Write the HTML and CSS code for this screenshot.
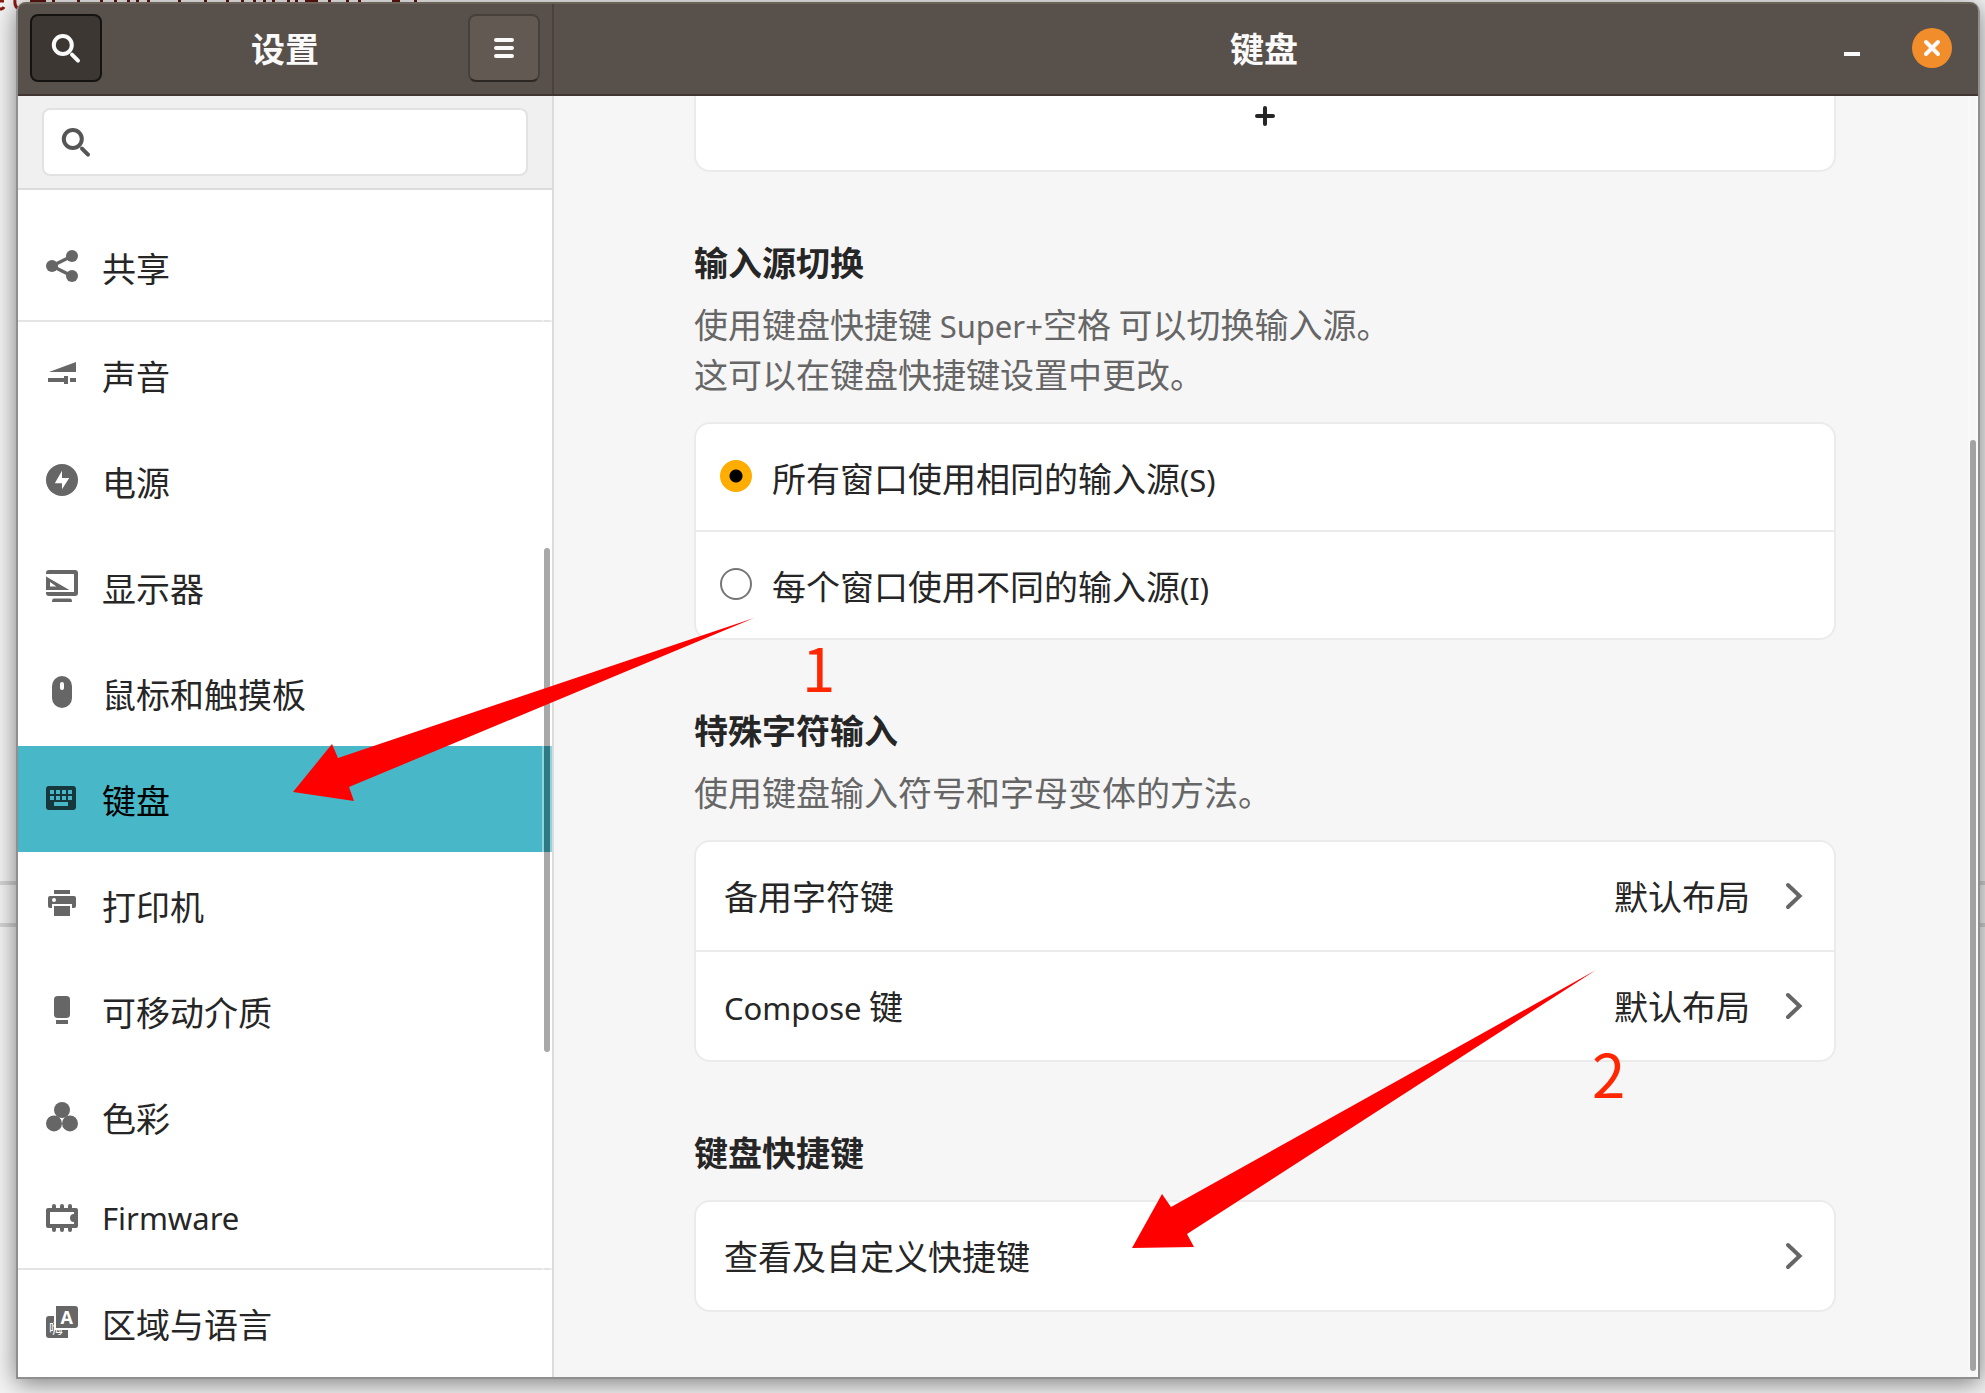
FILE: index.html
```html
<!DOCTYPE html>
<html lang="zh-CN">
<head>
<meta charset="utf-8">
<meta name="viewport" content="width=device-width, initial-scale=1">
<title>键盘 - 设置</title>
<link rel="stylesheet" href="styles.css">
</head>
<body>
<svg class="backdrop-marks" aria-hidden="true">
  <g fill="none" stroke="#8b1a10" stroke-width="3"><path d="M0 1h4M0 9q3 0 4-2M15 0q-1 8 5 9"/></g>
  <path fill="#5e1510" d="M30 0h16v2h-16zM52 0h3v2h-3zM77 0h3v2h-3zM100 0h3v2h-3zM114 0h3v2h-3zM127 0h3v2h-3zM136 0h3v2h-3zM147 0h3v2h-3zM178 0h3v2h-3zM204 0h3v2h-3zM226 0h3v2h-3zM241 0h3v2h-3zM253 0h3v2h-3zM263 0h3v2h-3zM272 0h3v2h-3zM287 0h3v2h-3zM295 0h3v2h-3zM305 0h13v2h-13zM328 0h3v2h-3zM346 0h3v2h-3zM358 0h3v2h-3zM392 0h8v2h-8zM414 0h3v2h-3z"/>
</svg>
<div class="window">
  <header class="titlebar">
    <div class="titlebar-side">
      <button class="tool-button is-active" type="button" aria-label="搜索">
        <svg class="icon" viewBox="0 0 16 16"><g fill="none" stroke="currentColor" stroke-width="2"><circle cx="6.4" cy="6.5" r="4.5"/><path stroke-linecap="round" d="M11 11.3l3 3"/></g></svg>
      </button>
      <h1 class="title">设置</h1>
      <button class="tool-button" type="button" aria-label="菜单">
        <svg class="icon" viewBox="0 0 16 16"><path stroke="currentColor" stroke-width="2" stroke-linecap="round" d="M4 4h8M4 8h8M4 12h8"/></svg>
      </button>
    </div>
    <div class="titlebar-main">
      <h2 class="title">键盘</h2>
      <div class="window-controls">
        <button class="minimize-button" type="button" aria-label="最小化"><svg class="icon" viewBox="0 0 16 16"><path fill="currentColor" d="M4 10h8v2H4z"/></svg></button>
        <button class="close-button" type="button" aria-label="关闭"><svg class="icon" viewBox="0 0 16 16"><path fill="none" stroke="currentColor" stroke-width="2" stroke-linecap="round" d="M5 5l6 6M11 5l-6 6"/></svg></button>
      </div>
    </div>
  </header>
  <div class="panes">
    <aside class="sidebar">
      <div class="search-bar">
        <label class="search-field">
          <svg class="icon" viewBox="0 0 16 16"><g fill="none" stroke="currentColor" stroke-width="2"><circle cx="6.4" cy="6.5" r="4.5"/><path stroke-linecap="round" d="M11 11.3l3 3"/></g></svg>
          <input class="search-input" type="text" aria-label="搜索设置">
        </label>
      </div>
      <nav class="nav">
        <a class="nav-row" href="#sharing">
          <svg class="icon" viewBox="0 0 16 16"><g fill="currentColor"><circle cx="3" cy="8" r="3"/><circle cx="13" cy="3" r="3"/><circle cx="13" cy="13" r="3"/></g><path fill="none" stroke="currentColor" stroke-width="1.7" d="M13 3L3 8l10 5"/></svg>
          <span class="nav-label">共享</span>
        </a>
        <a class="nav-row group-start" href="#sound">
          <svg class="icon" viewBox="0 0 16 16"><path fill="currentColor" d="M1.500 7L15 2v5zM1 10h8V9h2v4H9v-1H1zM12 10h3v2h-3z"/></svg>
          <span class="nav-label">声音</span>
        </a>
        <a class="nav-row" href="#power">
          <svg class="icon" viewBox="0 0 16 16"><circle cx="8" cy="8" r="8" fill="currentColor"/><path fill="#fff" d="M8 3.4L4.4 9.6H8v3L11.6 7H8z"/></svg>
          <span class="nav-label">电源</span>
        </a>
        <a class="nav-row" href="#displays">
          <svg class="icon" viewBox="0 0 16 16"><path fill="currentColor" fill-rule="evenodd" d="M0 2V1.500Q0 0 1.500 0h13Q16 0 16 1.500v10Q16 13 14.500 13h-13Q0 13 0 11.500V11h14V2zM0 3.300L11.700 10H0zM2 6v2.200h3.200zM3 16q0-1.700 1-1.700h8q1 0 1 1.700z"/></svg>
          <span class="nav-label">显示器</span>
        </a>
        <a class="nav-row" href="#mouse">
          <svg class="icon" viewBox="0 0 16 16"><rect x="3" width="10" height="16" rx="5" fill="currentColor"/><rect x="7" y="3" width="2" height="4" rx="1" fill="#fff"/></svg>
          <span class="nav-label">鼠标和触摸板</span>
        </a>
        <a class="nav-row is-selected" href="#keyboard" aria-current="page">
          <svg class="icon" viewBox="0 0 16 16"><path fill="currentColor" fill-rule="evenodd" d="M1.500 2h12Q15 2 15 3.500v9q0 1.500-1.500 1.500h-12Q0 14 0 12.500v-9Q0 2 1.500 2zM2 4v2h2V4zM5 4v2h2V4zM8 4v2h2V4zM11 4v2h2V4zM2 7v2h2V7zM5 7v2h2V7zM8 7v2h2V7zM11 7v2h2V7zM4 10v2h7v-2z"/></svg>
          <span class="nav-label">键盘</span>
        </a>
        <a class="nav-row" href="#printers">
          <svg class="icon" viewBox="0 0 16 16"><path fill="currentColor" fill-rule="evenodd" d="M4 1h8v2H4zM2 4h12q1 0 1 1v4q0 1-1 1h-1V8H3v2H2q-1 0-1-1V5q0-1 1-1zM4 5a1 1 0 100 2 1 1 0 000-2zM4 9h8v5H4z"/></svg>
          <span class="nav-label">打印机</span>
        </a>
        <a class="nav-row" href="#media">
          <svg class="icon" viewBox="0 0 16 16"><g fill="currentColor"><rect x="4" y="1" width="8" height="11" rx="1.800"/><path d="M5 13h6v2H5z"/></g></svg>
          <span class="nav-label">可移动介质</span>
        </a>
        <a class="nav-row" href="#color">
          <svg class="icon" viewBox="0 0 16 16"><g fill="currentColor"><circle cx="8" cy="5" r="4"/><circle cx="4" cy="11.700" r="4"/><circle cx="12" cy="11.700" r="4"/></g></svg>
          <span class="nav-label">色彩</span>
        </a>
        <a class="nav-row is-short" href="#firmware">
          <svg class="icon" viewBox="0 0 16 16"><path fill="currentColor" fill-rule="evenodd" d="M1 3h14q1 0 1 1v8q0 1-1 1H1q-1 0-1-1V4q0-1 1-1zM2 5v6h12v-1a2 2 0 010-4V5z"/><path stroke="currentColor" stroke-width="2" stroke-linecap="round" d="M4 2v2M8 2v2M12 2v2M4 12v2M8 12v2M12 12v2"/></svg>
          <span class="latin">Firmware</span>
        </a>
        <a class="nav-row group-start" href="#region">
          <svg class="icon" viewBox="0 0 16 16"><path fill="currentColor" d="M1.500 5H4v7h7v4H1.500Q0 16 0 14.500v-8Q0 5 1.500 5zM5 0h9.500Q16 0 16 1.500v8q0 1.500-1.500 1.500H5z"/><text class="glyph-han" x="1.500" y="13.500">嗨</text><path fill="currentColor" d="M5 0h9v11H5z"/><text class="glyph-latin" x="7.200" y="9">A</text></svg>
          <span class="nav-label">区域与语言</span>
        </a>
      </nav>
      <div class="scrollbar sidebar-scrollbar"><div class="scroll-thumb"></div></div>
    </aside>
    <main class="content">
      <button class="card add-button" type="button" aria-label="添加输入源">
        <svg class="icon" viewBox="0 0 16 16"><path stroke="currentColor" stroke-width="2" stroke-linecap="round" d="M8 4v8M4 8h8"/></svg>
      </button>
      <section class="section">
        <h3 class="section-title">输入源切换</h3>
        <p class="section-note">使用键盘快捷键 <span class="latin">Super+</span>空格 可以切换输入源。<br>这可以在键盘快捷键设置中更改。</p>
        <div class="card">
          <label class="card-row radio-row"><input class="radio" type="radio" name="source" checked><span class="nav-label">所有窗口使用相同的输入源<span class="latin">(S)</span></span></label>
          <label class="card-row radio-row"><input class="radio" type="radio" name="source"><span class="nav-label">每个窗口使用不同的输入源<span class="latin">(I)</span></span></label>
        </div>
      </section>
      <section class="section">
        <h3 class="section-title">特殊字符输入</h3>
        <p class="section-note">使用键盘输入符号和字母变体的方法。</p>
        <div class="card">
          <button class="card-row link-row" type="button"><span class="row-label">备用字符键</span><span>默认布局</span><svg class="icon chevron" viewBox="0 0 16 16"><path fill="none" stroke="currentColor" stroke-width="2" stroke-linecap="round" d="M7 2.500L12.800 8 7 13.500"/></svg></button>
          <button class="card-row link-row" type="button"><span class="row-label"><span class="latin">Compose</span> 键</span><span>默认布局</span><svg class="icon chevron" viewBox="0 0 16 16"><path fill="none" stroke="currentColor" stroke-width="2" stroke-linecap="round" d="M7 2.500L12.800 8 7 13.500"/></svg></button>
        </div>
      </section>
      <section class="section">
        <h3 class="section-title is-alone">键盘快捷键</h3>
        <div class="card">
          <button class="card-row link-row" type="button"><span class="row-label">查看及自定义快捷键</span><svg class="icon chevron" viewBox="0 0 16 16"><path fill="none" stroke="currentColor" stroke-width="2" stroke-linecap="round" d="M7 2.500L12.800 8 7 13.500"/></svg></button>
        </div>
      </section>
      <div class="scrollbar content-scrollbar"><div class="scroll-thumb"></div></div>
    </main>
  </div>
</div>
<svg class="annotations" aria-hidden="true">
  <path d="M293 792L332 744L338 758L754 618L349 787L354 801z"/>
  <path d="M1132 1248L1162 1194L1171 1207L1596 970L1187 1234L1194 1247z"/>
</svg>
<span class="step step-one">1</span>
<span class="step step-two">2</span>
</body>
</html>
```
FILE: styles.css
```css
* {
  box-sizing: border-box;
}

body {
  position: relative;
  display: flex;
  min-height: 100vh;
  margin: 0;
  padding: 2px 5px 14px 16px;
  overflow-x: hidden;
  color: #262626;
  background:
    linear-gradient(#d4d4d4, #d4d4d4) 0 881px / 100% 4px no-repeat,
    linear-gradient(#d4d4d4, #d4d4d4) 0 923px / 100% 4px no-repeat,
    #f4f4f4;
  font: 34px/50px "Noto Sans CJK SC", sans-serif;
}

h1, h2, h3, p {
  margin: 0;
  font-size: 34px;
}

button, input {
  margin: 0;
  padding: 0;
  border: 0;
  background: none;
  color: inherit;
  font: inherit;
}

.latin {
  font-family: "Noto Sans", sans-serif;
  font-size: 31px;
  line-height: 1;
}

.icon {
  display: block;
  flex: none;
  width: 32px;
  height: 32px;
}

.backdrop-marks {
  position: absolute;
  top: 0;
  left: 0;
  width: 420px;
  height: 12px;
}

/* Window frame */
.window {
  position: relative;
  display: flex;
  flex: 1;
  flex-direction: column;
  border: 2px solid #8f8f8f;
  border-top: 0;
  border-radius: 10px 10px 0 0;
  background: #f6f6f6;
  box-shadow: 0 4px 24px rgba(0, 0, 0, .5);
}

.titlebar {
  display: flex;
  height: 94px;
  padding-bottom: 0;
  border-top: 2px solid #6b6259;
  border-bottom: 2px solid #423634;
  border-radius: 8px 8px 0 0;
  background: #58504a;
  color: #fafafa;
}

.titlebar-side {
  display: flex;
  align-items: center;
  justify-content: space-between;
  width: 536px;
  padding: 0 12px 2px;
  border-right: 2px solid #4a413d;
}

.titlebar-main {
  display: grid;
  flex: 1;
  grid-template-columns: 1fr auto 1fr;
  align-items: center;
  padding: 0 26px 2px 22px;
}

.titlebar-main .title {
  grid-column: 2;
}

.title {
  font-weight: 700;
}

.tool-button {
  display: flex;
  align-items: center;
  justify-content: center;
  width: 72px;
  height: 68px;
  border: 2px solid #463f3b;
  border-bottom-color: #2b2725;
  border-radius: 8px;
  background: #625953;
}

.tool-button.is-active {
  border-color: #141312;
  background: #3c3733;
}

.window-controls {
  display: flex;
  align-items: center;
  justify-content: flex-end;
  gap: 44px;
}

.close-button {
  display: flex;
  align-items: center;
  justify-content: center;
  width: 40px;
  height: 40px;
  border-radius: 50%;
  background: #f28d2c;
}

.panes {
  display: flex;
  flex: 1;
}

/* Sidebar */
.sidebar {
  position: relative;
  width: 536px;
  border-right: 2px solid #dcdcdc;
  background: #fff;
}

.search-bar {
  padding: 12px 24px;
  border-bottom: 2px solid #dcdcdc;
  background: #f0f0f0;
}

.search-field {
  display: flex;
  align-items: center;
  gap: 12px;
  height: 68px;
  padding: 0 16px;
  border: 2px solid #e2e2e2;
  border-radius: 8px;
  background: #fff;
  color: #555;
}

.search-input {
  flex: 1;
  min-width: 0;
  outline: 0;
}

.nav {
  padding-top: 24px;
}

.nav-row {
  display: flex;
  align-items: center;
  gap: 24px;
  height: 106px;
  padding: 0 28px 2px;
  color: #262626;
  text-decoration: none;
}

.nav-label {
  padding-top: 4px;
}

.nav-row .icon {
  color: #666;
}

.nav-row.is-short {
  height: 98px;
}

.nav-row.group-start {
  height: 108px;
  border-top: 2px solid #e4e4e4;
}

.nav-row.is-selected {
  background: #48b8c8;
  color: #000;
}

.nav-row.is-selected .icon {
  color: #16373c;
}

.glyph-han {
  fill: #fff;
  font-size: 7px;
}

.glyph-latin {
  fill: #fff;
  font: 700 9px "Open Sans", sans-serif;
}

.scrollbar {
  position: absolute;
  top: 0;
  right: 0;
  bottom: 0;
  width: 10px;
  border: 0 solid rgba(255, 255, 255, .4);
  border-width: 0 2px;
}

.scroll-thumb {
  position: absolute;
  right: 0;
  left: 0;
  border-radius: 3px;
  background: rgba(0, 0, 0, .34);
}

.sidebar-scrollbar {
  top: 94px;
}

.sidebar-scrollbar .scroll-thumb {
  top: 358px;
  height: 504px;
}

.content-scrollbar .scroll-thumb {
  top: 344px;
  bottom: 6px;
}

/* Content */
.content {
  position: relative;
  flex: 1;
  padding: 0 142px 64px 140px;
}

.card {
  display: block;
  width: 100%;
  overflow: hidden;
  border: 2px solid #ebebeb;
  border-radius: 16px;
  background: #fff;
}

.add-button {
  display: flex;
  justify-content: center;
  height: 76px;
  padding-top: 4px;
  border-top: 0;
  border-radius: 0 0 16px 16px;
}

.section {
  margin-top: 65px;
}

.section-title {
  margin-bottom: 12px;
  font-weight: 700;
}

.section-title.is-alone {
  margin-bottom: 23px;
}

.section-note {
  margin-bottom: 23px;
  color: #666;
}

.card-row {
  display: flex;
  align-items: center;
  width: 100%;
  text-align: left;
}

.card-row + .card-row {
  border-top: 2px solid #ebebeb;
}

.radio-row {
  gap: 20px;
  height: 106px;
  padding: 0 24px 2px;
}

.radio-row + .radio-row {
  height: 108px;
}

.radio {
  flex: none;
  width: 32px;
  height: 32px;
  border: 2px solid #777;
  border-radius: 50%;
  appearance: none;
  background: #fff;
}

.radio:checked {
  border-color: #ffad00;
  background: radial-gradient(circle, #000 6px, #ffad00 7px);
}

.link-row {
  gap: 24px;
  height: 108px;
  padding: 0 28px;
}

.link-row + .link-row {
  height: 110px;
}

.row-label {
  flex: 1;
}

.chevron {
  color: #666;
}

/* Marks drawn over the window */
.annotations {
  position: absolute;
  top: 0;
  left: 0;
  width: 100%;
  height: 100%;
  fill: #f00;
  pointer-events: none;
}

.step {
  position: absolute;
  color: #ff2600;
  font-size: 60px;
  line-height: 60px;
}

.step-one {
  top: 636px;
  left: 802px;
}

.step-two {
  top: 1042px;
  left: 1592px;
}
```
